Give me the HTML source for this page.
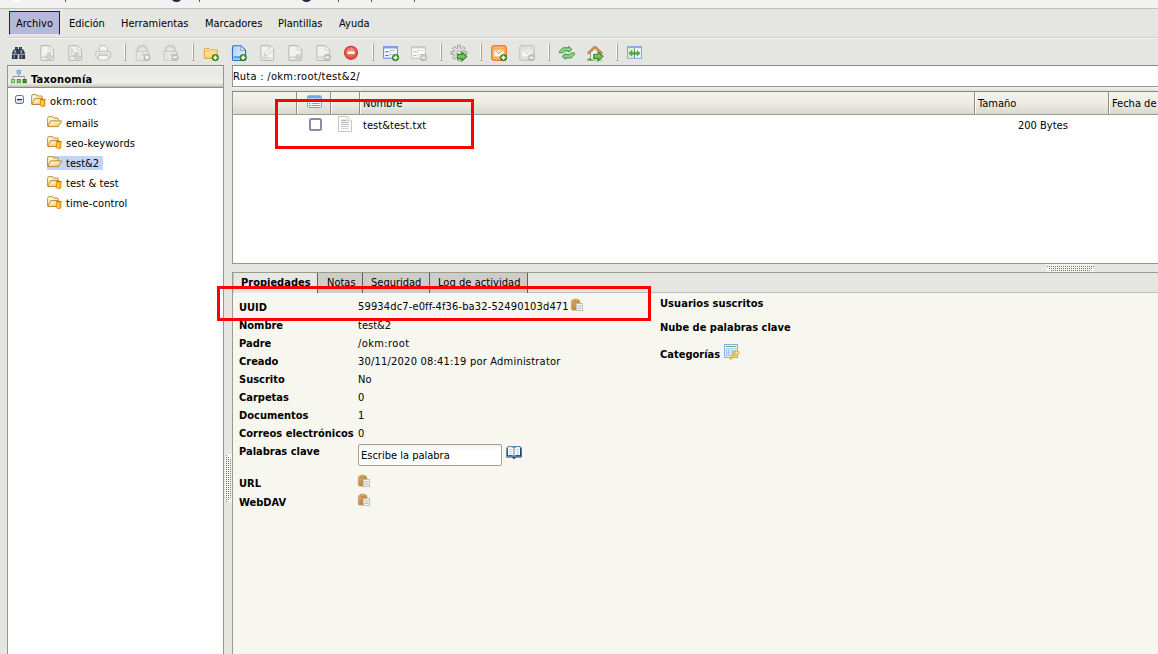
<!DOCTYPE html>
<html lang="es">
<head>
<meta charset="utf-8">
<title>OpenKM</title>
<style>
html,body{margin:0;padding:0;}
body{width:1158px;height:654px;overflow:hidden;position:relative;background:#e5e5e1;
 font-family:"DejaVu Sans Condensed","DejaVu Sans","Liberation Sans",sans-serif;font-size:11px;color:#000;line-height:13px;}
.abs{position:absolute;}
svg{display:block;overflow:visible;}
.t{position:absolute;white-space:nowrap;height:13px;line-height:13px;}
.b{font-weight:bold;}
#topstrip{left:0;top:0;width:1158px;height:8px;background:#f2f2f2;border-bottom:1px solid #c0c0c0;}
#menusel{left:9px;top:11px;width:49px;height:22px;background:#b5b9d9;background-clip:padding-box;border:1px solid #0a246a;border-bottom:1px solid transparent;}
#menuline{left:7px;top:37px;width:1151px;height:1px;background:#d0d0cc;border-bottom:1px solid #f7f7f5;}
.sep{position:absolute;top:43px;width:1px;height:17px;background:#fbfbf9;border-right:1px solid #b3a596;border-bottom:1px solid #b3a596;}
#leftpanel{left:7px;top:65px;width:215px;height:600px;background:#fff;border:1px solid #97978a;border-top-color:#8b8b7d;}
#lefthead{left:0;top:0;width:215px;height:21px;background:linear-gradient(#f4f4f2 0,#e9e9e5 12%,#ebebe7 50%,#f0f0ec 78%,#dadad2 92%,#bcbcb0 100%);border-bottom:1px solid #8e8e80;}
#sel{left:47px;top:156px;width:56px;height:14px;background:#c3d5f4;}
#pathbox{left:232px;top:65px;width:940px;height:20px;background:#fff;border:1px solid #97978a;border-top-color:#8b8b7d;}
#filebox{left:232px;top:91px;width:940px;height:171px;background:#fff;border:1px solid #97978a;border-top-color:#8b8b7d;}
#filehead{left:0;top:0;width:940px;height:22px;background:linear-gradient(#f4f3ec,#ecebe4 50%,#d9d9d1);border-bottom:1px solid #9d9d8f;}
.csep{position:absolute;top:0;width:1px;height:22px;background:#8f8f81;border-right:1px solid #fbfbf8;}
#hsplit{left:1046px;top:264px;width:48px;height:8px;background:#f3f3f0;}
.dots{position:absolute;height:1px;background:repeating-linear-gradient(90deg,#77776a 0,#77776a 1px,transparent 1px,transparent 2px);}
#vsplit{left:225px;top:454px;width:7px;height:48px;background:#f3f3f0;}
.vdots{position:absolute;width:1px;background:repeating-linear-gradient(180deg,#77776a 0,#77776a 1px,transparent 1px,transparent 2px);}
#tabpanel{left:232px;top:272px;width:940px;height:400px;background:#f7f7ef;border:1px solid #9c9c8b;border-right:none;}
#tabbar{left:0;top:0;width:940px;height:19px;background:#e5e5e1;border-bottom:1px solid #bcbcba;}
.tab{position:absolute;top:0;height:20px;background:#cecec9;border-right:1px solid #5f5f62;}
.tab.on{background:#e7e7e3;border-left:1px solid #c9c9c5;}
.red{position:absolute;border:3px solid #fe0000;box-sizing:border-box;}
#kw{left:358px;top:444px;width:142px;height:20px;background:linear-gradient(#efeff6,#fff 5px);border:1px solid #a3a38f;border-radius:2px;}
.dk{position:absolute;background:#3a3a3a;}
</style>
</head>
<body>
<div id="topstrip" class="abs"></div>
<div class="dk" style="left:65px;top:0;width:1px;height:2px;background:#555"></div>
<div class="dk" style="left:199px;top:0;width:1px;height:2px;background:#555"></div>
<div class="dk" style="left:338px;top:0;width:1px;height:2px;background:#555"></div>
<div class="dk" style="left:371px;top:0;width:1px;height:2px;background:#555"></div>
<div class="dk" style="left:414px;top:0;width:1px;height:2px;background:#555"></div>
<div class="abs" style="left:10.6px;top:-10.4px;width:12.6px;height:12.6px;border-radius:7px;background:#fff"></div>
<div class="abs" style="left:171px;top:-9px;width:11px;height:11px;border-radius:6px;background:#1c2a44"></div>
<div class="abs" style="left:301px;top:-9px;width:11px;height:11px;border-radius:6px;background:#1c2a44"></div>
<!-- menu -->
<div id="menusel" class="abs"></div>
<div class="t" style="left:16px;top:17px;">Archivo</div>
<div class="t" style="left:69px;top:17px;">Edición</div>
<div class="t" style="left:121px;top:17px;">Herramientas</div>
<div class="t" style="left:205px;top:17px;">Marcadores</div>
<div class="t" style="left:278px;top:17px;">Plantillas</div>
<div class="t" style="left:339px;top:17px;">Ayuda</div>
<div id="menuline" class="abs"></div>
<!-- toolbar -->
<svg class="abs" style="left:11px;top:45px" width="16" height="16" viewBox="0 0 16 16" ><g>
<path d="M4 1.9H6.9V4.2H8.1V1.9H11V4L12.7 5.2L14.1 8.6V14H8.3V9.2H6.7V14H0.9V8.6L2.3 5.2L4 4Z" fill="#27323f"/>
<rect x="3.3" y="5" width="1.9" height="3.2" fill="#8ea1b8"/><rect x="9.4" y="5" width="1.9" height="3.2" fill="#8ea1b8"/>
<rect x="4.6" y="2.4" width="1.3" height="1.6" fill="#5d7088"/><rect x="9.1" y="2.4" width="1.3" height="1.6" fill="#5d7088"/>
<rect x="0.9" y="8.7" width="5.8" height="1.1" fill="#a9b7c6"/><rect x="8.3" y="8.7" width="5.8" height="1.1" fill="#a9b7c6"/>
<rect x="2.4" y="10.3" width="1.7" height="3" fill="#6c7f96"/><rect x="9.8" y="10.3" width="1.7" height="3" fill="#6c7f96"/>
<rect x="6.7" y="5.6" width="1.6" height="2.6" fill="#3c4c60"/>
</g></svg>
<svg class="abs" style="left:39px;top:45px" width="16" height="16" viewBox="0 0 16 16" ><path d="M1.8 1.4Q1.8 0.6 2.6 0.6H10.2L14.6 5V14.6Q14.6 15.4 13.8 15.4H2.6Q1.8 15.4 1.8 14.6Z" fill="#f1f1ef" stroke="#bdbdbb" stroke-width="1.15"/><path d="M10.2 0.8V5H14.4" fill="#f8f8f6" stroke="#d0d0ce"/><rect x="3" y="11.5" width="5" height="1.6" fill="#d2d2d0"/><path d="M8.6 7.5H11.6V11H14.8L10.2 15.5L5.6 11H8.6Z" fill="#cfcfcd" stroke="#c2c2c0" stroke-width="0.7"/></svg>
<svg class="abs" style="left:67px;top:45px" width="16" height="16" viewBox="0 0 16 16" ><path d="M1.8 1.4Q1.8 0.6 2.6 0.6H10.2L14.6 5V14.6Q14.6 15.4 13.8 15.4H2.6Q1.8 15.4 1.8 14.6Z" fill="#f1f1ef" stroke="#bdbdbb" stroke-width="1.15"/><path d="M10.2 0.8V5H14.4" fill="#f8f8f6" stroke="#d0d0ce"/><path d="M4 2.5C6 6 4 11 1.8 13.5M3 12.5C6 10 9 9.5 11 10M5.5 4C6 8 8.5 11 10.5 12.5" fill="none" stroke="#cfcfcd" stroke-width="1.1"/><path d="M8.6 7.5H11.6V11H14.8L10.2 15.5L5.6 11H8.6Z" fill="#cfcfcd" stroke="#c2c2c0" stroke-width="0.7"/></svg>
<svg class="abs" style="left:95px;top:45px" width="16" height="16" viewBox="0 0 16 16" ><path d="M4.5 0.6H10L12.5 3V7H4.5Z" fill="#f3f3f1" stroke="#c2c2c0"/>
<rect x="0.7" y="6.2" width="15.2" height="7" rx="2.4" fill="#e9e9e7" stroke="#bebebc"/>
<rect x="3.5" y="10.5" width="9.6" height="4.6" fill="#f5f5f3" stroke="#c4c4c2"/>
<rect x="3" y="8.3" width="10.5" height="1.1" fill="#cacac8"/></svg>
<svg class="abs" style="left:135px;top:45px" width="16" height="16" viewBox="0 0 16 16" ><path d="M2.6 7V5C2.6 -0.6 11.8 -0.6 11.8 5V7" fill="none" stroke="#c0c0be" stroke-width="2.3"/>
<path d="M2.6 7V5C2.6 -0.6 11.8 -0.6 11.8 5V7" fill="none" stroke="#e6e6e4" stroke-width="0.8"/>
<rect x="1.2" y="6.7" width="12.4" height="8.6" fill="#efefed" stroke="#c2c2c0"/>
<rect x="3" y="8.6" width="2.6" height="1" fill="#d6d6d4"/><rect x="3" y="10.6" width="2.6" height="1" fill="#d6d6d4"/><rect x="3" y="12.6" width="5" height="1" fill="#d6d6d4"/>
<rect x="6.8" y="8.4" width="2" height="2.6" fill="#cdcdcb"/><circle cx="12" cy="12.3" r="3.2" fill="#c4c4c2" stroke="#aeaeac" stroke-width="0.8"/><rect x="10" y="11.55" width="4" height="1.5" fill="#fafafa"/><rect x="11.25" y="10.3" width="1.5" height="4" fill="#fafafa"/></svg>
<svg class="abs" style="left:163px;top:45px" width="16" height="16" viewBox="0 0 16 16" ><path d="M2.6 7V5C2.6 -0.6 11.8 -0.6 11.8 5V7" fill="none" stroke="#c0c0be" stroke-width="2.3"/>
<path d="M2.6 7V5C2.6 -0.6 11.8 -0.6 11.8 5V7" fill="none" stroke="#e6e6e4" stroke-width="0.8"/>
<rect x="1.2" y="6.7" width="12.4" height="8.6" fill="#efefed" stroke="#c2c2c0"/>
<rect x="3" y="8.6" width="2.6" height="1" fill="#d6d6d4"/><rect x="3" y="10.6" width="2.6" height="1" fill="#d6d6d4"/><rect x="3" y="12.6" width="5" height="1" fill="#d6d6d4"/>
<rect x="6.8" y="8.4" width="2" height="2.6" fill="#cdcdcb"/><circle cx="12" cy="12.3" r="3.2" fill="#c4c4c2" stroke="#aeaeac" stroke-width="0.8"/><rect x="10" y="11.55" width="4" height="1.5" fill="#fafafa"/></svg>
<svg class="abs" style="left:203px;top:45px" width="16" height="16" viewBox="0 0 16 16" ><defs><linearGradient id="fg1" x1="0" y1="0" x2="0" y2="1"><stop offset="0" stop-color="#fef5cc"/><stop offset="1" stop-color="#f8d468"/></linearGradient></defs>
<path d="M1.4 3.7H6.2L7.2 4.9H14.2V13.3H1.4Z" fill="url(#fg1)" stroke="#e6a030"/>
<path d="M2.4 6H6L6.9 7H13.2" fill="none" stroke="#f3c868" stroke-width="1"/>
<rect x="3" y="5.6" width="3.2" height="1.1" fill="#eeb850"/><circle cx="12.3" cy="12.6" r="3.2" fill="#46962f" stroke="#2b701d" stroke-width="0.8"/><rect x="10.3" y="11.85" width="4" height="1.5" fill="#fff"/><rect x="11.55" y="10.6" width="1.5" height="4" fill="#fff"/></svg>
<svg class="abs" style="left:231px;top:45px" width="16" height="16" viewBox="0 0 16 16" ><defs><linearGradient id="dg1" x1="0" y1="0" x2="1" y2="1"><stop offset="0" stop-color="#b4d0f6"/><stop offset="1" stop-color="#e8f2fd"/></linearGradient></defs>
<path d="M1.5 1.8Q1.5 0.7 2.6 0.7H9.9L14.6 5.2V14.2Q14.6 15.4 13.5 15.4H2.6Q1.5 15.4 1.5 14.2Z" fill="url(#dg1)" stroke="#336ecb" stroke-width="1.15"/>
<path d="M9.7 1.2V5.4H14.1" fill="#e4effc" stroke="#5d8ed8" stroke-width="0.8"/>
<rect x="2.7" y="11.2" width="7" height="2.2" fill="#48a3ee"/><circle cx="12.2" cy="12.6" r="3.2" fill="#46962f" stroke="#2b701d" stroke-width="0.8"/><rect x="10.2" y="11.85" width="4" height="1.5" fill="#fff"/><rect x="11.45" y="10.6" width="1.5" height="4" fill="#fff"/></svg>
<svg class="abs" style="left:259px;top:45px" width="16" height="16" viewBox="0 0 16 16" ><path d="M1.8 1.4Q1.8 0.6 2.6 0.6H10.2L14.6 5V14.6Q14.6 15.4 13.8 15.4H2.6Q1.8 15.4 1.8 14.6Z" fill="#f1f1ef" stroke="#bdbdbb" stroke-width="1.15"/><path d="M10.2 0.8V5H14.4" fill="#f8f8f6" stroke="#d0d0ce"/><rect x="3" y="12.2" width="8.5" height="1.4" fill="#d0d0ce"/><path d="M4.5 11.5L5.6 8.2L12.6 1.2L15 3.6L8 10.6Z" fill="#f0f0ee" stroke="#cbcbc9" stroke-width="0.9"/><path d="M4.5 11.5L5.3 9L7.2 10.8Z" fill="#c4c4c2"/></svg>
<svg class="abs" style="left:287px;top:45px" width="16" height="16" viewBox="0 0 16 16" ><path d="M1.8 1.4Q1.8 0.6 2.6 0.6H10.2L14.6 5V14.6Q14.6 15.4 13.8 15.4H2.6Q1.8 15.4 1.8 14.6Z" fill="#f1f1ef" stroke="#bdbdbb" stroke-width="1.15"/><path d="M10.2 0.8V5H14.4" fill="#f8f8f6" stroke="#d0d0ce"/><rect x="2.6" y="11.4" width="6" height="1.8" fill="#d3d3d1"/><path d="M11.4 8.4L12.6 9.8L14.4 9.3L14.2 11.2L15.8 12.2L14.2 13.2L14.4 15.1L12.6 14.6L11.4 16L10.2 14.6L8.4 15.1L8.6 13.2L7 12.2L8.6 11.2L8.4 9.3L10.2 9.8Z" fill="#cdcdcb"/></svg>
<svg class="abs" style="left:315px;top:45px" width="16" height="16" viewBox="0 0 16 16" ><path d="M1.8 1.4Q1.8 0.6 2.6 0.6H10.2L14.6 5V14.6Q14.6 15.4 13.8 15.4H2.6Q1.8 15.4 1.8 14.6Z" fill="#f1f1ef" stroke="#bdbdbb" stroke-width="1.15"/><path d="M10.2 0.8V5H14.4" fill="#f8f8f6" stroke="#d0d0ce"/><rect x="2.6" y="11.4" width="6" height="1.8" fill="#d3d3d1"/><circle cx="12.2" cy="12.4" r="3.2" fill="#c4c4c2" stroke="#aeaeac" stroke-width="0.8"/><rect x="10.2" y="11.65" width="4" height="1.5" fill="#fafafa"/></svg>
<svg class="abs" style="left:343px;top:45px" width="16" height="16" viewBox="0 0 16 16" ><defs><radialGradient id="rg1" cx="0.5" cy="0.35" r="0.7"><stop offset="0" stop-color="#f59a8a"/><stop offset="1" stop-color="#dc3a28"/></radialGradient></defs>
<circle cx="8" cy="7.8" r="6.5" fill="url(#rg1)" stroke="#cf3a2a" stroke-width="1.2"/>
<rect x="4.4" y="6.6" width="7.2" height="2.4" rx="0.5" fill="#fff"/></svg>
<svg class="abs" style="left:383px;top:45px" width="16" height="16" viewBox="0 0 16 16" ><rect x="0.6" y="1.6" width="13.8" height="11.6" fill="#fdfdfd" stroke="#6690d6" stroke-width="1.1"/>
<rect x="0.6" y="1.2" width="13.8" height="2.3" fill="#79a3e4"/>
<rect x="2.4" y="6.1" width="3" height="1.2" fill="#3b6fd0"/><rect x="2.4" y="9.9" width="3" height="1.2" fill="#3b6fd0"/>
<path d="M6.8 8V5.5H12.4" fill="none" stroke="#b9b9b9" stroke-width="0.9"/><path d="M6.8 11.8V9.3H12.4" fill="none" stroke="#b9b9b9" stroke-width="0.9"/><circle cx="12.5" cy="12.6" r="3.2" fill="#46962f" stroke="#2b701d" stroke-width="0.8"/><rect x="10.5" y="11.85" width="4" height="1.5" fill="#fff"/><rect x="11.75" y="10.6" width="1.5" height="4" fill="#fff"/></svg>
<svg class="abs" style="left:411px;top:45px" width="16" height="16" viewBox="0 0 16 16" ><rect x="0.6" y="1.6" width="13.8" height="11.6" fill="#fdfdfd" stroke="#c4c4c2" stroke-width="1.1"/>
<rect x="0.6" y="1.2" width="13.8" height="2.3" fill="#cdcdcb"/>
<rect x="2.4" y="6.1" width="3" height="1.2" fill="#bcbcba"/><rect x="2.4" y="9.9" width="3" height="1.2" fill="#bcbcba"/>
<path d="M6.8 8V5.5H12.4" fill="none" stroke="#d0d0ce" stroke-width="0.9"/><path d="M6.8 11.8V9.3H12.4" fill="none" stroke="#d0d0ce" stroke-width="0.9"/><circle cx="12.5" cy="12.6" r="3.2" fill="#c4c4c2" stroke="#aeaeac" stroke-width="0.8"/><rect x="10.5" y="11.85" width="4" height="1.5" fill="#fafafa"/></svg>
<svg class="abs" style="left:451px;top:45px" width="16" height="16" viewBox="0 0 16 16" ><path d="M15.79 6.66L15.79 9.34L13.11 9.41L12.61 10.61L14.45 12.56L12.56 14.45L10.61 12.61L9.41 13.11L9.34 15.79L6.66 15.79L6.59 13.11L5.39 12.61L3.44 14.45L1.55 12.56L3.39 10.61L2.89 9.41L0.21 9.34L0.21 6.66L2.89 6.59L3.39 5.39L1.55 3.44L3.44 1.55L5.39 3.39L6.59 2.89L6.66 0.21L9.34 0.21L9.41 2.89L10.61 3.39L12.56 1.55L14.45 3.44L12.61 5.39L13.11 6.59Z" fill="#dcdcdc" stroke="#8e8e8e" stroke-width="0.8"/><circle cx="8" cy="8" r="2.3" fill="#e5e5e1" stroke="#a9a9a9" stroke-width="0.8"/><path d="M6.5 9.4H10.9V7.1L15.7 11.5L10.9 15.9V13.6H6.5Z" fill="#7cc265" stroke="#2f8a20" stroke-width="1.1"/></svg>
<svg class="abs" style="left:491px;top:45px" width="16" height="16" viewBox="0 0 16 16" ><rect x="0.5" y="0.5" width="15" height="15" rx="2.6" fill="#ff8e35" stroke="#ff7a12"/>
<rect x="2" y="2" width="12" height="12" rx="1.2" fill="#ffa85c" stroke="#ffc794" stroke-width="0.7"/>
<rect x="3.4" y="4.8" width="9.2" height="6.6" fill="#fff"/>
<path d="M3.4 4.8L8 9L12.6 4.8" fill="#ffd9b3" stroke="#ff9a48" stroke-width="0.9"/><circle cx="12.5" cy="12.6" r="3.2" fill="#46962f" stroke="#2b701d" stroke-width="0.8"/><rect x="10.5" y="11.85" width="4" height="1.5" fill="#fff"/><rect x="11.75" y="10.6" width="1.5" height="4" fill="#fff"/></svg>
<svg class="abs" style="left:519px;top:45px" width="16" height="16" viewBox="0 0 16 16" ><rect x="0.5" y="0.5" width="15" height="15" rx="2.6" fill="#d2d2d0" stroke="#c6c6c4"/>
<rect x="2" y="2" width="12" height="12" rx="1.2" fill="#dededc" stroke="#e6e6e4" stroke-width="0.7"/>
<rect x="3.4" y="4.8" width="9.2" height="6.6" fill="#f7f7f5"/>
<path d="M3.4 4.8L8 9L12.6 4.8" fill="#e9e9e7" stroke="#d4d4d2" stroke-width="0.9"/><circle cx="12.5" cy="12.6" r="3.2" fill="#c4c4c2" stroke="#aeaeac" stroke-width="0.8"/><rect x="10.5" y="11.85" width="4" height="1.5" fill="#fafafa"/></svg>
<svg class="abs" style="left:559px;top:45px" width="16" height="16" viewBox="0 0 16 16" ><path d="M0.5 7.7L0.5 6.2L3.8 2.8L9.6 2.8L9.6 1.5L12.9 4.3L9.6 7.1L9.6 6.0L5.6 6.0L3.8 7.7Z" fill="#90d48a" stroke="#37973a" stroke-width="1" stroke-linejoin="round"/>
<path d="M15.5 8.0L15.5 9.5L12.2 12.9L6.4 12.9L6.4 14.2L3.1 11.4L6.4 8.6L6.4 9.7L10.4 9.7L12.2 8.0Z" fill="#90d48a" stroke="#37973a" stroke-width="1" stroke-linejoin="round"/></svg>
<svg class="abs" style="left:587px;top:45px" width="16" height="16" viewBox="0 0 16 16" ><rect x="3.6" y="6.8" width="9" height="7.6" fill="#fcfcfc"/>
<rect x="3.2" y="7.4" width="0.9" height="7" fill="#8c8c8c"/>
<path d="M1 8.7L7.2 2.6Q8 2 8.8 2.6L15 8.7" fill="none" stroke="#b9783a" stroke-width="2.5"/>
<path d="M1.6 8.1L7.4 2.6Q8 2.2 8.6 2.6L14.4 8.1" fill="none" stroke="#e2ab6c" stroke-width="0.9"/>
<path d="M0.4 15.4C0.6 13 3.4 12.6 4.4 14.2L6 14.6V15.4Z" fill="#55a544"/>
<rect x="0.4" y="14.7" width="15.2" height="0.8" fill="#4c9a3c" opacity="0.75"/><path d="M6.7 9.200000000000001H11.100000000000001V6.9L15.899999999999999 11.3L11.100000000000001 15.700000000000001V13.4H6.7Z" fill="#7cc265" stroke="#2f8a20" stroke-width="1.1"/></svg>
<svg class="abs" style="left:627px;top:45px" width="16" height="16" viewBox="0 0 16 16" ><rect x="0.6" y="1.6" width="13.8" height="11.6" fill="#fbfcff" stroke="#7b9ede" stroke-width="1"/>
<rect x="0.6" y="1.2" width="13.8" height="2" fill="#8bb0e9"/>
<rect x="1.2" y="3.6" width="6" height="9" fill="#d6f3c6"/>
<rect x="7.1" y="3.4" width="0.9" height="9.6" fill="#3f9a3f"/>
<path d="M1.8 8.3L4.8 5.5V7.4H10.2V5.5L13.2 8.3L10.2 11.1V9.2H4.8V11.1Z" fill="#55ad55" stroke="#3c923c" stroke-width="0.6"/></svg>
<div class="sep" style="left:124px"></div>
<div class="sep" style="left:192px"></div>
<div class="sep" style="left:372px"></div>
<div class="sep" style="left:440px"></div>
<div class="sep" style="left:480px"></div>
<div class="sep" style="left:548px"></div>
<div class="sep" style="left:616px"></div>
<!-- left panel -->
<div id="leftpanel" class="abs"><div id="lefthead" class="abs"></div></div>
<svg class="abs" style="left:11px;top:70px" width="16" height="14" viewBox="0 0 16 14" ><rect x="6.2" y="0.5" width="3.2" height="3.2" fill="#a6c8f4" stroke="#6a98dc" stroke-width="0.9"/>
<path d="M2.2 8.6V6.4H13.4V8.6M7.8 4.6V6.4" fill="none" stroke="#7a7a7a" stroke-width="0.8"/>
<rect x="0.5" y="9.5" width="3.1" height="3.1" fill="#b4e2a6" stroke="#55b044" stroke-width="1"/>
<rect x="6.3" y="9.5" width="3.1" height="3.1" fill="#8ccc7c" stroke="#43a032" stroke-width="1"/>
<rect x="12.1" y="9.5" width="3.1" height="3.1" fill="#4c9e3c" stroke="#1e7612" stroke-width="1"/></svg>
<div class="t b" style="left:31px;top:73px;letter-spacing:0.22px">Taxonomía</div>
<div id="sel" class="abs"></div>
<svg class="abs" style="left:15px;top:95px" width="9" height="9" viewBox="0 0 9 9" ><defs><linearGradient id="mg" x1="0" y1="0" x2="0" y2="1"><stop offset="0" stop-color="#fff"/><stop offset="1" stop-color="#d8d8e0"/></linearGradient></defs>
<rect x="0.5" y="0.5" width="8" height="8" rx="1.8" fill="url(#mg)" stroke="#5a66b8"/>
<rect x="2" y="4" width="5" height="1.2" fill="#0a0acc"/></svg>
<svg class="abs" style="left:31px;top:94px" width="16" height="14" viewBox="0 0 16 14" ><defs><linearGradient id="f0" x1="0" y1="0" x2="0.7" y2="1"><stop offset="0" stop-color="#fffdf0"/><stop offset="0.45" stop-color="#fdeebc"/><stop offset="1" stop-color="#f5c65e"/></linearGradient></defs><path d="M0.6 10V2.4Q0.6 0.6 2 0.6H5Q6.2 0.6 6.6 2H10.2Q11.4 2 11.4 3.4V4.6" fill="url(#f0)" stroke="#b67a1e" stroke-width="0.85"/>
<path d="M0.8 10.5L3.8 4.6H12L9.6 10.5Z" fill="url(#f0)" stroke="#b67a1e" stroke-width="0.85" stroke-linejoin="round"/>
<path d="M8.8 5.7H14.8" stroke="#c8821a" stroke-width="1.3"/>
<rect x="9.7" y="6" width="4.2" height="6.4" rx="0.9" fill="#ffb200" stroke="#dc8e12" stroke-width="0.9"/>
<rect x="10.6" y="6.8" width="1.1" height="4.8" fill="#ffe79a"/></svg>
<div class="t" style="left:50px;top:95px;letter-spacing:0.3px">okm:root</div>
<svg class="abs" style="left:47px;top:116px" width="16" height="14" viewBox="0 0 16 14" ><defs><linearGradient id="f1" x1="0" y1="0" x2="0.7" y2="1"><stop offset="0" stop-color="#fffdf0"/><stop offset="0.45" stop-color="#fdeebc"/><stop offset="1" stop-color="#f5c65e"/></linearGradient></defs><path d="M0.6 10V2.4Q0.6 0.6 2 0.6H5Q6.2 0.6 6.6 2H10.2Q11.4 2 11.4 3.4V4.6" fill="url(#f1)" stroke="#b67a1e" stroke-width="0.85"/>
<path d="M0.8 10.6L3.8 4.9H14.7L11.2 10.6Z" fill="url(#f1)" stroke="#b67a1e" stroke-width="0.85" stroke-linejoin="round"/></svg>
<div class="t" style="left:66px;top:117px;">emails</div>
<svg class="abs" style="left:47px;top:136px" width="16" height="14" viewBox="0 0 16 14" ><defs><linearGradient id="f2" x1="0" y1="0" x2="0.7" y2="1"><stop offset="0" stop-color="#fffdf0"/><stop offset="0.45" stop-color="#fdeebc"/><stop offset="1" stop-color="#f5c65e"/></linearGradient></defs><path d="M0.6 10V2.4Q0.6 0.6 2 0.6H5Q6.2 0.6 6.6 2H10.2Q11.4 2 11.4 3.4V4.6" fill="url(#f2)" stroke="#b67a1e" stroke-width="0.85"/>
<path d="M0.8 10.5L3.8 4.6H12L9.6 10.5Z" fill="url(#f2)" stroke="#b67a1e" stroke-width="0.85" stroke-linejoin="round"/>
<path d="M8.8 5.7H14.8" stroke="#c8821a" stroke-width="1.3"/>
<rect x="9.7" y="6" width="4.2" height="6.4" rx="0.9" fill="#ffb200" stroke="#dc8e12" stroke-width="0.9"/>
<rect x="10.6" y="6.8" width="1.1" height="4.8" fill="#ffe79a"/></svg>
<div class="t" style="left:66px;top:137px;letter-spacing:0.11px">seo-keywords</div>
<svg class="abs" style="left:47px;top:156px" width="16" height="14" viewBox="0 0 16 14" ><defs><linearGradient id="f3" x1="0" y1="0" x2="0.7" y2="1"><stop offset="0" stop-color="#fffdf0"/><stop offset="0.45" stop-color="#fdeebc"/><stop offset="1" stop-color="#f5c65e"/></linearGradient></defs><path d="M0.6 10V2.4Q0.6 0.6 2 0.6H5Q6.2 0.6 6.6 2H10.2Q11.4 2 11.4 3.4V4.6" fill="url(#f3)" stroke="#b67a1e" stroke-width="0.85"/>
<path d="M0.8 10.6L3.8 4.9H14.7L11.2 10.6Z" fill="url(#f3)" stroke="#b67a1e" stroke-width="0.85" stroke-linejoin="round"/></svg>
<div class="t" style="left:66px;top:157px;">test&amp;2</div>
<svg class="abs" style="left:47px;top:176px" width="16" height="14" viewBox="0 0 16 14" ><defs><linearGradient id="f4" x1="0" y1="0" x2="0.7" y2="1"><stop offset="0" stop-color="#fffdf0"/><stop offset="0.45" stop-color="#fdeebc"/><stop offset="1" stop-color="#f5c65e"/></linearGradient></defs><path d="M0.6 10V2.4Q0.6 0.6 2 0.6H5Q6.2 0.6 6.6 2H10.2Q11.4 2 11.4 3.4V4.6" fill="url(#f4)" stroke="#b67a1e" stroke-width="0.85"/>
<path d="M0.8 10.5L3.8 4.6H12L9.6 10.5Z" fill="url(#f4)" stroke="#b67a1e" stroke-width="0.85" stroke-linejoin="round"/>
<path d="M8.8 5.7H14.8" stroke="#c8821a" stroke-width="1.3"/>
<rect x="9.7" y="6" width="4.2" height="6.4" rx="0.9" fill="#ffb200" stroke="#dc8e12" stroke-width="0.9"/>
<rect x="10.6" y="6.8" width="1.1" height="4.8" fill="#ffe79a"/></svg>
<div class="t" style="left:66px;top:177px;letter-spacing:0.07px">test &amp; test</div>
<svg class="abs" style="left:47px;top:196px" width="16" height="14" viewBox="0 0 16 14" ><defs><linearGradient id="f5" x1="0" y1="0" x2="0.7" y2="1"><stop offset="0" stop-color="#fffdf0"/><stop offset="0.45" stop-color="#fdeebc"/><stop offset="1" stop-color="#f5c65e"/></linearGradient></defs><path d="M0.6 10V2.4Q0.6 0.6 2 0.6H5Q6.2 0.6 6.6 2H10.2Q11.4 2 11.4 3.4V4.6" fill="url(#f5)" stroke="#b67a1e" stroke-width="0.85"/>
<path d="M0.8 10.5L3.8 4.6H12L9.6 10.5Z" fill="url(#f5)" stroke="#b67a1e" stroke-width="0.85" stroke-linejoin="round"/>
<path d="M8.8 5.7H14.8" stroke="#c8821a" stroke-width="1.3"/>
<rect x="9.7" y="6" width="4.2" height="6.4" rx="0.9" fill="#ffb200" stroke="#dc8e12" stroke-width="0.9"/>
<rect x="10.6" y="6.8" width="1.1" height="4.8" fill="#ffe79a"/></svg>
<div class="t" style="left:66px;top:197px;letter-spacing:0.1px">time-control</div>
<!-- right -->
<div id="pathbox" class="abs"></div>
<div class="abs" style="left:232px;top:87px;width:926px;height:4px;background:linear-gradient(#f4f4f2,#ecece9 40%,#dcdcd7)"></div>
<div class="t" style="left:233px;top:70px;letter-spacing:0.3px">Ruta : /okm:root/test&amp;2/</div>
<div id="filebox" class="abs"><div id="filehead" class="abs">
<div class="csep" style="left:63px"></div>
<div class="csep" style="left:97px"></div>
<div class="csep" style="left:126px"></div>
<div class="csep" style="left:741px"></div>
<div class="csep" style="left:875px"></div>
</div></div>
<svg class="abs" style="left:307px;top:95px" width="15" height="13" viewBox="0 0 15 13" ><rect x="0.6" y="1" width="13.8" height="11.4" rx="1.2" fill="#fff" stroke="#7398dc" stroke-width="1"/>
<path d="M0.6 3.6V2Q0.6 0.6 2 0.6H13Q14.4 0.6 14.4 2V3.6Z" fill="#7ba2e3"/>
<rect x="2.2" y="7.9" width="1.2" height="1.2" fill="#3f7be0"/><rect x="2.2" y="9.9" width="1.2" height="1.2" fill="#3f7be0"/>
<rect x="4.6" y="8.1" width="8" height="0.9" fill="#8f8f8f"/><rect x="4.6" y="10.1" width="8" height="0.9" fill="#8f8f8f"/></svg>
<div class="t" style="left:363px;top:97px;">Nombre</div>
<div class="t" style="left:978px;top:97px;">Tamaño</div>
<div class="t" style="left:1112px;top:97px;">Fecha de modificación</div>
<div class="abs" style="left:309px;top:118px;width:9px;height:9px;border:2px solid #8b89a3;border-radius:2.5px;background:#fff"></div>
<svg class="abs" style="left:338px;top:116px" width="14" height="16" viewBox="0 0 14 16" ><path d="M0.5 0.5H9.2L13.5 4.8V15.5H0.5Z" fill="#fff" stroke="#c4c4c4"/>
<path d="M9.2 0.5V4.8H13.5" fill="#f3f3f3" stroke="#c9c9c9" stroke-width="0.8"/>
<rect x="3" y="3.8" width="5.6" height="0.9" fill="#9a9a9a"/><rect x="3" y="5.9" width="7.8" height="0.9" fill="#a6a6a6"/>
<rect x="3" y="8" width="7.8" height="0.9" fill="#b5b5b5"/><rect x="3" y="10.1" width="7.8" height="0.9" fill="#c0c0c0"/><rect x="3" y="12.2" width="7.8" height="0.9" fill="#cdcdcd"/></svg>
<div class="t" style="left:363px;top:119px;letter-spacing:0.06px">test&amp;test.txt</div>
<div class="t" style="left:1018px;top:119px;">200 Bytes</div>
<div id="hsplit" class="abs"><div class="dots" style="left:1px;top:2px;width:47px"></div><div class="dots" style="left:3px;top:4px;width:43px"></div><div class="dots" style="left:5px;top:6px;width:39px"></div></div>
<div id="vsplit" class="abs"><div class="vdots" style="left:1px;top:1px;height:47px"></div><div class="vdots" style="left:3px;top:3px;height:43px"></div><div class="vdots" style="left:5px;top:5px;height:39px"></div></div>
<!-- tabs -->
<div id="tabpanel" class="abs"><div id="tabbar" class="abs"></div>
<div class="tab on" style="left:0;width:83px"></div><div class="tab" style="left:85px;width:44px"></div><div class="tab" style="left:130px;width:66px"></div><div class="tab" style="left:197px;width:97px"></div></div>
<div class="t b" style="left:241px;top:276px;">Propiedades</div>
<div class="t" style="left:327px;top:276px;">Notas</div>
<div class="t" style="left:371px;top:276px;">Seguridad</div>
<div class="t" style="left:438px;top:276px;letter-spacing:0.05px">Log de actividad</div>
<div class="t b" style="left:239px;top:301px;">UUID</div>
<div class="t b" style="left:239px;top:319px;">Nombre</div>
<div class="t b" style="left:239px;top:337px;">Padre</div>
<div class="t b" style="left:239px;top:355px;">Creado</div>
<div class="t b" style="left:239px;top:373px;">Suscrito</div>
<div class="t b" style="left:239px;top:391px;">Carpetas</div>
<div class="t b" style="left:239px;top:409px;">Documentos</div>
<div class="t b" style="left:239px;top:427px;">Correos electrónicos</div>
<div class="t b" style="left:239px;top:445px;">Palabras clave</div>
<div class="t b" style="left:239px;top:477px;">URL</div>
<div class="t b" style="left:239px;top:496px;">WebDAV</div>
<div class="t" style="left:358px;top:300px;letter-spacing:0.15px">59934dc7-e0ff-4f36-ba32-52490103d471</div>
<div class="t" style="left:358px;top:319px;">test&amp;2</div>
<div class="t" style="left:358px;top:337px;letter-spacing:0.4px">/okm:root</div>
<div class="t" style="left:358px;top:355px;letter-spacing:0.21px">30/11/2020 08:41:19 por Administrator</div>
<div class="t" style="left:358px;top:373px;">No</div>
<div class="t" style="left:358px;top:391px;">0</div>
<div class="t" style="left:358px;top:409px;">1</div>
<div class="t" style="left:358px;top:427px;">0</div>
<svg class="abs" style="left:571px;top:299px" width="12" height="12" viewBox="0 0 12 12" ><defs><linearGradient id="c1" x1="0" y1="0" x2="1" y2="1"><stop offset="0" stop-color="#dfae6a"/><stop offset="1" stop-color="#a9742f"/></linearGradient></defs>
<rect x="0.4" y="1.2" width="8.4" height="9.8" rx="1.3" fill="url(#c1)" stroke="#b9843f" stroke-width="0.6"/>
<rect x="2.6" y="0.3" width="4.2" height="2" rx="0.6" fill="#c99344" stroke="#a8762e" stroke-width="0.5"/>
<rect x="3.4" y="0.9" width="1" height="0.9" fill="#ffe27a"/><rect x="5" y="0.9" width="1" height="0.9" fill="#ffe27a"/>
<rect x="5.2" y="4.6" width="6.4" height="7" fill="#f4f4f4" stroke="#b4b4b4" stroke-width="0.8"/>
<rect x="6.4" y="6.4" width="4" height="1.1" fill="#b9b9b9"/><rect x="6.4" y="8.7" width="4" height="1.1" fill="#b9b9b9"/></svg>
<div id="kw" class="abs"></div>
<div class="t" style="left:361px;top:449px;">Escribe la palabra</div>
<svg class="abs" style="left:506px;top:446px" width="16" height="13" viewBox="0 0 16 13" ><defs><linearGradient id="bk" x1="0" y1="0" x2="1" y2="1"><stop offset="0" stop-color="#2f74b8"/><stop offset="1" stop-color="#0a2f5c"/></linearGradient></defs>
<path d="M0.3 1.4H1.6V0.3H14.4V1.4H15.7V11.6H9.6L9 12.8H7L6.4 11.6H0.3Z" fill="url(#bk)"/>
<path d="M2 1.2Q5.5 0.4 7.6 1.8V9.6Q5.5 8.6 2 9.2Z" fill="#fff"/><path d="M14 1.2Q10.5 0.4 8.4 1.8V9.6Q10.5 8.6 14 9.2Z" fill="#fff"/>
<rect x="7.3" y="1.8" width="1.4" height="8.2" fill="#b9b9b9"/>
<g fill="#c6c6c6"><rect x="3" y="2.8" width="3.2" height="0.9"/><rect x="3" y="4.8" width="3.2" height="0.9"/><rect x="3" y="6.8" width="3.2" height="0.9"/><rect x="9.8" y="2.8" width="3.2" height="0.9"/><rect x="9.8" y="4.8" width="3.2" height="0.9"/><rect x="9.8" y="6.8" width="3.2" height="0.9"/></g>
<rect x="1" y="10.4" width="14" height="0.7" fill="#7fa6d0"/></svg>
<svg class="abs" style="left:358px;top:475px" width="12" height="12" viewBox="0 0 12 12" ><defs><linearGradient id="c2" x1="0" y1="0" x2="1" y2="1"><stop offset="0" stop-color="#dfae6a"/><stop offset="1" stop-color="#a9742f"/></linearGradient></defs>
<rect x="0.4" y="1.2" width="8.4" height="9.8" rx="1.3" fill="url(#c2)" stroke="#b9843f" stroke-width="0.6"/>
<rect x="2.6" y="0.3" width="4.2" height="2" rx="0.6" fill="#c99344" stroke="#a8762e" stroke-width="0.5"/>
<rect x="3.4" y="0.9" width="1" height="0.9" fill="#ffe27a"/><rect x="5" y="0.9" width="1" height="0.9" fill="#ffe27a"/>
<rect x="5.2" y="4.6" width="6.4" height="7" fill="#f4f4f4" stroke="#b4b4b4" stroke-width="0.8"/>
<rect x="6.4" y="6.4" width="4" height="1.1" fill="#b9b9b9"/><rect x="6.4" y="8.7" width="4" height="1.1" fill="#b9b9b9"/></svg>
<svg class="abs" style="left:358px;top:494px" width="12" height="12" viewBox="0 0 12 12" ><defs><linearGradient id="c3" x1="0" y1="0" x2="1" y2="1"><stop offset="0" stop-color="#dfae6a"/><stop offset="1" stop-color="#a9742f"/></linearGradient></defs>
<rect x="0.4" y="1.2" width="8.4" height="9.8" rx="1.3" fill="url(#c3)" stroke="#b9843f" stroke-width="0.6"/>
<rect x="2.6" y="0.3" width="4.2" height="2" rx="0.6" fill="#c99344" stroke="#a8762e" stroke-width="0.5"/>
<rect x="3.4" y="0.9" width="1" height="0.9" fill="#ffe27a"/><rect x="5" y="0.9" width="1" height="0.9" fill="#ffe27a"/>
<rect x="5.2" y="4.6" width="6.4" height="7" fill="#f4f4f4" stroke="#b4b4b4" stroke-width="0.8"/>
<rect x="6.4" y="6.4" width="4" height="1.1" fill="#b9b9b9"/><rect x="6.4" y="8.7" width="4" height="1.1" fill="#b9b9b9"/></svg>
<div class="t b" style="left:660px;top:297px;letter-spacing:0.06px">Usuarios suscritos</div>
<div class="t b" style="left:660px;top:321px;">Nube de palabras clave</div>
<div class="t b" style="left:660px;top:348px;">Categorías</div>
<svg class="abs" style="left:724px;top:344px" width="16" height="16" viewBox="0 0 16 16" ><rect x="0.6" y="0.6" width="12.8" height="12.8" fill="#fdfdff" stroke="#86a8de" stroke-width="1.1"/>
<rect x="2" y="2" width="10" height="1" fill="#62bb62"/>
<rect x="2" y="4.2" width="10" height="7.8" fill="#a9c2ee"/>
<g fill="#fff"><rect x="3" y="5.1" width="1.1" height="1.1"/><rect x="5" y="5.1" width="2.8" height="1.1"/><rect x="8.8" y="5.1" width="2.6" height="1.1"/><rect x="3" y="7.3" width="1.1" height="1.1"/><rect x="5" y="7.3" width="2.8" height="1.1"/><rect x="3" y="9.5" width="1.1" height="1.1"/><rect x="5" y="9.5" width="2.8" height="1.1"/></g>
<path d="M6.2 15.4L5.9 13.8L10 9.8Q9.8 8 11.2 6.9Q13.2 5.8 14.8 7.2Q15.9 9 14.4 10.6Q13.2 11.5 11.8 11.1L7.8 15Z" fill="#f6cd52" stroke="#dfa024" stroke-width="0.7"/>
<circle cx="13.2" cy="8.6" r="0.8" fill="#fff6d0"/></svg>
<!-- red annotations -->
<div class="red" style="left:275px;top:99px;width:199px;height:50px"></div>
<div class="red" style="left:217px;top:286px;width:434px;height:35px"></div>
</body>
</html>
